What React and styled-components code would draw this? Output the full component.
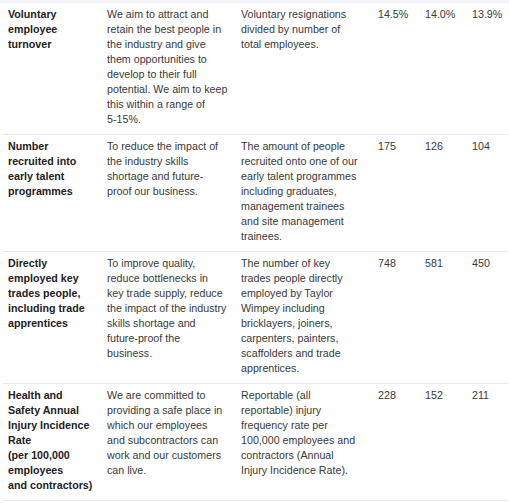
import React from "react";
import styled, { createGlobalStyle } from "styled-components";

const GlobalStyle = createGlobalStyle`
    html, body {
        margin: 0;
        padding: 0;
        background: #fff;
    }
    body {
        font-family: "Liberation Sans", Arial, Helvetica, sans-serif;
        color: #333;
    }
`;

const Page = styled.div`
    width: 509px;
    border-top: 3px solid #f2f2f7;
    box-sizing: border-box;
`;

const Table = styled.table`
    margin-left: 3px;
    width: 505px;
    border-collapse: collapse;
    table-layout: fixed;
    font-size: 10.7px;
    line-height: 15px;
`;

const Row = styled.tr`
    border-bottom: 1px solid #e8e8f0;
`;

const Cell = styled.td`
    vertical-align: top;
    padding: 4px ${props => props.$pr || 0}px 7px 5px;
    color: #3a3a3a;
    white-space: ${props => props.$nowrap ? "nowrap" : "normal"};
`;

const TitleCell = styled(Cell)`
    font-weight: bold;
    color: #222;
`;

const NoWrap = styled.span`
    white-space: nowrap;
`;

const columns = [99, 134, 137, 47, 47, 41];

const rows = [
    {
        title: "Voluntary employee turnover",
        aim: (
            <>
                We aim to attract and retain the best people in the industry and give them
                opportunities to develop to their full potential. We aim to keep this within a
                range of <NoWrap>5-15%.</NoWrap>
            </>
        ),
        definition: "Voluntary resignations divided by number of total employees.",
        values: ["14.5%", "14.0%", "13.9%"],
    },
    {
        title: "Number recruited into early talent programmes",
        aim: "To reduce the impact of the industry skills shortage and future-proof our business.",
        definition: "The amount of people recruited onto one of our early talent programmes including graduates, management trainees and site management trainees.",
        values: ["175", "126", "104"],
    },
    {
        title: "Directly employed key trades people, including trade apprentices",
        aim: "To improve quality, reduce bottlenecks in key trade supply, reduce the impact of the industry skills shortage and future-proof the business.",
        definition: "The number of key trades people directly employed by Taylor Wimpey including bricklayers, joiners, carpenters, painters, scaffolders and trade apprentices.",
        values: ["748", "581", "450"],
    },
    {
        title: (
            <>
                Health and Safety Annual Injury Incidence Rate<br />
                (per 100,000 employees<br />
                and contractors)
            </>
        ),
        aim: "We are committed to providing a safe place in which our employees and subcontractors can work and our customers can live.",
        definition: "Reportable (all reportable) injury frequency rate per 100,000 employees and contractors (Annual Injury Incidence Rate).",
        values: ["228", "152", "211"],
    },
];

const App = () => (
    <Page>
        <GlobalStyle />
        <Table>
            <colgroup>
                {columns.map((w, i) => <col key={i} style={{ width: w }} />)}
            </colgroup>
            <tbody>
                {rows.map((row, i) => (
                    <Row key={i}>
                        <TitleCell $pr={7}>{row.title}</TitleCell>
                        <Cell $pr={8.5}>{row.aim}</Cell>
                        <Cell $pr={13}>{row.definition}</Cell>
                        {row.values.map((v, j) => (
                            <Cell key={j} $nowrap>{v}</Cell>
                        ))}
                    </Row>
                ))}
            </tbody>
        </Table>
    </Page>
);

export default App;
